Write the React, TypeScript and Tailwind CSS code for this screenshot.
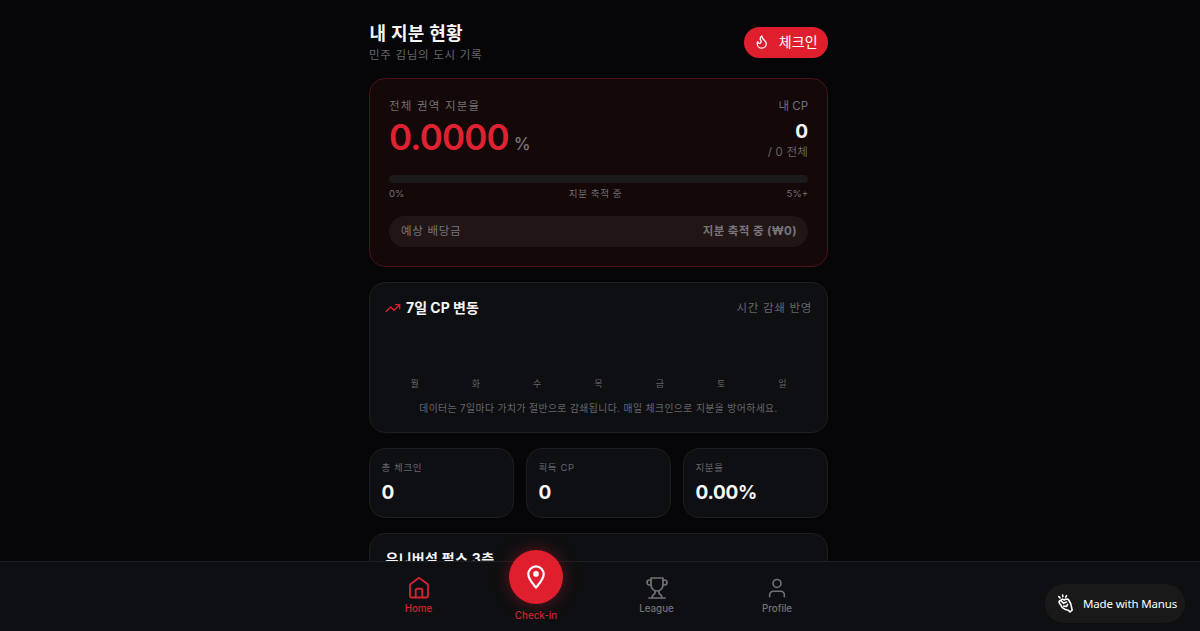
import React from 'react';
import { TrendingUp } from 'lucide-react';

const days = ['월', '화', '수', '목', '금', '토', '일'];

const stats = [
  { label: '총 체크인', value: '0' },
  { label: '획득 CP', value: '0' },
  { label: '지분율', value: '0.00%' },
];

const FlameIcon = () => (
  <svg width="15.5" height="15.5" viewBox="0 0 24 24" fill="none" stroke="currentColor" strokeWidth="2" strokeLinejoin="round" strokeLinecap="round">
    <path d="M8.5 14.5A2.5 2.5 0 0 0 11 12c0-1.38-.5-2-1-3-1.072-2.143-.224-4.054 2-6 .5 2.5 2 4.9 4 6.5 2 1.6 3 3.5 3 5.5a7 7 0 1 1-14 0c0-1.153.433-2.294 1-3a2.5 2.5 0 0 0 2.5 2.5z" />
  </svg>
);

const HomeIcon = () => (
  <svg width="24" height="24" viewBox="0 0 24 24" fill="none" stroke="currentColor" strokeWidth="1.9" strokeLinejoin="round" strokeLinecap="round">
    <path d="M3 9.3c0-.5.2-.9.6-1.2L11 2.4c.6-.5 1.4-.5 2 0l7.400 5.700c.4.3.6.7.6 1.200v10.700a1.500 1.500 0 0 1-1.500 1.500h-15A1.500 1.500 0 0 1 3 20Z" />
    <path d="M8.700 21.300v-7.300a1.300 1.300 0 0 1 1.300-1.300h4a1.300 1.300 0 0 1 1.300 1.300v7.300" />
  </svg>
);

const PinIcon = () => (
  <svg width="18" height="24" viewBox="0 0 18 24" fill="none" stroke="currentColor" strokeWidth="2.2" strokeLinejoin="round">
    <path d="M9 22.500C6.800 20 1.300 14.500 1.300 9.100a7.700 7.700 0 0 1 15.400 0C16.700 14.500 11.200 20 9 22.500Z" />
    <circle cx="9" cy="8.9" r="2.8" fill="currentColor" stroke="none" />
  </svg>
);

const TrophyIcon = () => (
  <svg width="24" height="24" viewBox="0 0 24 24" fill="none" stroke="currentColor" strokeWidth="1.7" strokeLinejoin="round" strokeLinecap="round">
    <path d="M6 2h12v7a6 6 0 0 1-12 0Z" />
    <path d="M6 9H4.500a2.500 2.500 0 0 1 0-5H6M18 9h1.500a2.500 2.500 0 0 0 0-5H18" />
    <path d="M4 22h16M10 14.700V17c0 .6-.5 1-1 1.200C7.900 18.800 7 20.200 7 22M14 14.700V17c0 .6.5 1 1 1.200 1.100.6 2 2 2 3.800" />
  </svg>
);

const ProfileIcon = () => (
  <svg width="22" height="22" viewBox="0 0 24 24" fill="none" stroke="currentColor" strokeWidth="1.8" strokeLinejoin="round" strokeLinecap="round">
    <circle cx="12" cy="7" r="4.3" />
    <path d="M4 21.500v-2a4 4 0 0 1 4-4h8a4 4 0 0 1 4 4v2" />
  </svg>
);

const ManusIcon = () => (
  <svg width="17" height="19" viewBox="0 0 18 20" fill="none" stroke="currentColor" strokeWidth="1.7" strokeLinejoin="round" strokeLinecap="round">
    <path d="M3.200 4 1.900 2.700M6.200 2.800 6 1M9.200 3.200l.9-1.500" />
    <path d="M4.200 11.800 2.500 9.500C1.300 7.800 3 6.300 4.500 7.300 4 5.600 6 4.900 7.500 6.300 9.300 5 12 5 12.800 7c.5 1.300 1.500 2.500 1.900 3.900.4 1.300.2 2.300.8 3.300l.5 2.800-2.200 1.800-1.800-1.600c-1.200-.6-2.400-.5-3.700-1-1.900-.8-3.500-2.400-4.100-4.400Z" />
    <path d="M4.500 7.300 7 9.800l3-1.300M7.200 12.800l3 .4 1-2.200" />
  </svg>
);

const App: React.FC = () => {
  return (
    <div className="h-[631px] w-full overflow-hidden relative bg-[#060608] text-[#f5f5f5] font-['Inter','Noto_Sans_CJK_KR',sans-serif]">
      <main className="w-[459px] ml-[369px] pt-[23px]">
        {/* 헤더 */}
        <header className="flex justify-between h-[55px]">
          <div>
            <h1 className="pl-[0.5px] text-[18px] leading-[21px] tracking-[0.3px] font-bold">내 지분 현황</h1>
            <p className="mt-px text-[11.5px] leading-[20px] tracking-[0.7px] text-[#66666a]">민주 김님의 도시 기록</p>
          </div>
          <button className="mt-[3.5px] h-[31px] w-[84px] rounded-full bg-[#df1f2d] flex items-center justify-center gap-[9px] pb-px text-[14px] tracking-[0.2px] text-white">
            <FlameIcon />
            <span className="-mt-px">체크인</span>
          </button>
        </header>

        {/* 지분율 */}
        <section className="h-[189px] rounded-[16px] border border-[#4a1218] bg-[#140809] px-[19px] pt-[17px]">
          <div className="flex justify-between h-[79px]">
            <div>
              <p className="text-[11.5px] leading-[20px] tracking-[1.2px] text-[#727074]">전체 권역 지분율</p>
              <div className="flex items-baseline gap-[5px]">
                <span className="text-[35px] leading-[42px] tracking-[-0.8px] font-semibold text-[#df2231]">0.0000</span>
                <span className="text-[17px] font-medium text-[#77757a]">%</span>
              </div>
            </div>
            <div className="text-right">
              <p className="text-[11.5px] leading-[20px] text-[#727074]">내 CP</p>
              <p className="text-[19px] leading-[31px] font-bold">0</p>
              <p className="text-[11.5px] leading-[11px] tracking-[0.2px] text-[#68666a]">/ 0 전체</p>
            </div>
          </div>
          <div className="h-[8px] rounded-full bg-[#1b1a1b]" />
          <div className="mt-[3px] flex justify-between text-[9.5px] leading-[15px] text-[#727074]">
            <span>0%</span>
            <span className="tracking-[0.6px]">지분 축적 중</span>
            <span>5%+</span>
          </div>
          <div className="mt-[15px] h-[31px] rounded-full bg-[#221516] pl-[12px] pr-[11px] flex items-center justify-between text-[11.5px] text-[#77757a]">
            <span className="tracking-[0.7px]">예상 배당금</span>
            <span className="font-bold tracking-[0.4px]">지분 축적 중 (₩0)</span>
          </div>
        </section>

        {/* 7일 변동 */}
        <section className="mt-[15px] h-[151px] rounded-[16px] border border-[#1d1e21] bg-[#0e0f12] px-[15px] pt-[16px]">
          <div className="flex justify-between items-center h-[20px]">
            <h2 className="flex items-center gap-[5px] pb-[3px] text-[14px] leading-[20px] font-bold">
              <TrendingUp size={16} className="text-[#df1f2d]" />
              7일 CP 변동
            </h2>
            <span className="text-[11.5px] tracking-[0.7px] text-[#66666a]">시간 감쇄 반영</span>
          </div>
          <div className="mt-[57px] mx-[-1px] grid grid-cols-7 text-center text-[9px] leading-[16px] text-[#66666a]">
            {days.map((day) => (
              <span key={day}>{day}</span>
            ))}
          </div>
          <p className="mt-[9px] whitespace-nowrap text-center text-[9.8px] leading-[16px] tracking-[0.42px] text-[#66666a]">
            데이터는 7일마다 가치가 절반으로 감쇄됩니다. 매일 체크인으로 지분을 방어하세요.
          </p>
        </section>

        {/* 요약 */}
        <section className="mt-[15px] grid grid-cols-3 gap-[12px]">
          {stats.map((stat) => (
            <div key={stat.label} className="h-[70px] rounded-[16px] border border-[#1d1e21] bg-[#0e0f12] px-[11.5px] pt-[11px]">
              <p className="text-[9.5px] leading-[15px] tracking-[0.6px] text-[#66666a]">{stat.label}</p>
              <p className="mt-[6px] text-[19px] leading-[24px] tracking-[-0.3px] font-bold">{stat.value}</p>
            </div>
          ))}
        </section>

        <section className="mt-[15px] h-[150px] rounded-[16px] border border-[#1d1e21] bg-[#0e0f12] px-[15.5px] pt-[15px]">
          <h2 className="text-[14px] leading-[20px] tracking-[0.3px] font-bold">유니버설 펄스 3층</h2>
        </section>
      </main>

      {/* 하단 내비게이션 */}
      <nav className="absolute inset-x-0 bottom-0 h-[70px] border-t border-[#1d1e21] bg-[#0e0f12] text-[9.8px] leading-[14px] font-medium text-[#727276]">
        <div className="flex ml-[360.5px]">
          <div className="w-[116px] pt-[14px] flex flex-col items-center gap-[2px] text-[#cf2431]">
            <HomeIcon />
            <span>Home</span>
          </div>
          <div className="w-[119px] mt-[-11.7px] flex flex-col items-center gap-[4.7px] text-[#cf2431]">
            <div className="size-[54px] rounded-full bg-[#df1f2d] flex items-center justify-center text-white shadow-[0_0_16px_rgba(223,31,45,0.4)]">
              <PinIcon />
            </div>
            <span>Check-in</span>
          </div>
          <div className="w-[122px] pt-[14px] flex flex-col items-center gap-[2px]">
            <TrophyIcon />
            <span>League</span>
          </div>
          <div className="w-[119px] pt-[15px] flex flex-col items-center gap-[3px]">
            <ProfileIcon />
            <span>Profile</span>
          </div>
        </div>
      </nav>

      <div className="absolute left-[1045px] top-[584px] h-[39px] w-[140px] rounded-full bg-[#191919] flex items-center pl-[12px] gap-[9px] text-[11.5px] text-white">
        <ManusIcon />
        <span className="whitespace-nowrap tracking-[-0.15px] pt-px font-['Noto_Sans',sans-serif]">Made with Manus</span>
      </div>
    </div>
  );
};

export default App;
